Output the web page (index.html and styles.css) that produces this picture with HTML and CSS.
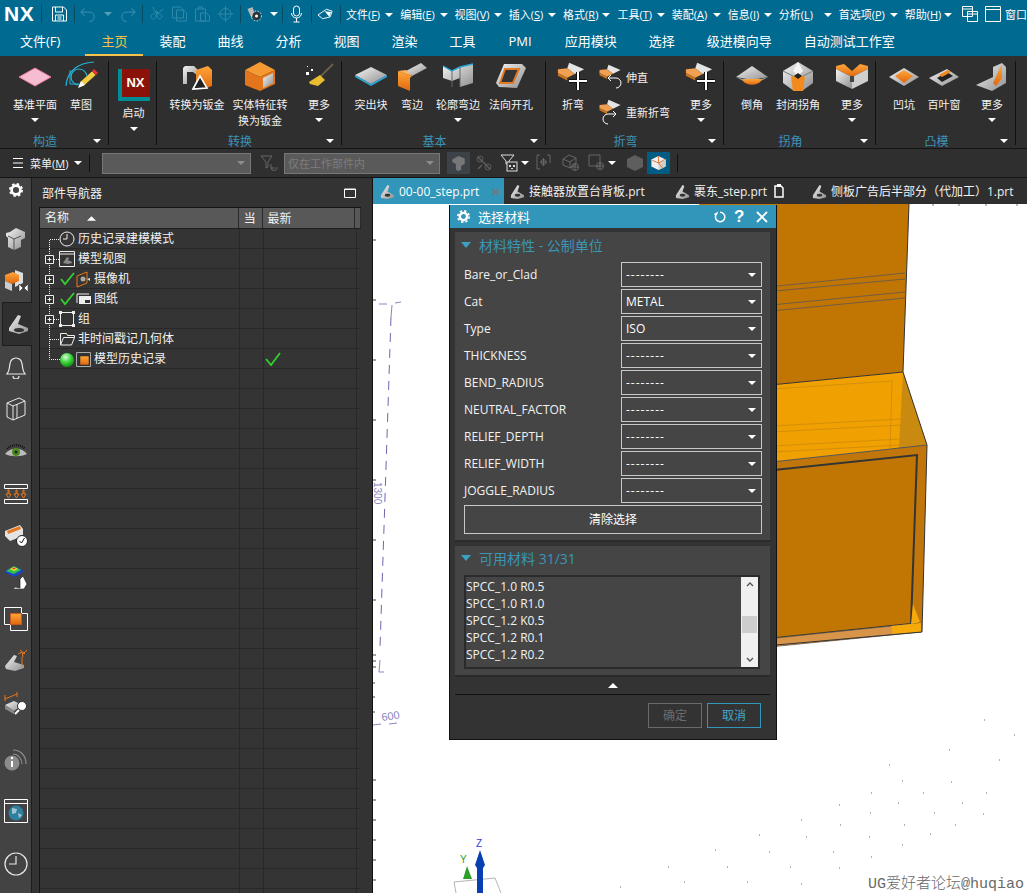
FILE: index.html
```html
<!DOCTYPE html>
<html lang="zh-CN">
<head>
  <meta charset="UTF-8" />
  <title>NX - 选择材料</title>
  <link rel="stylesheet" href="styles.css">
</head>
<body>
  <svg class="defs" width="0" height="0">
    <defs>
      <linearGradient id="o" x1="0" y1="0" x2="0" y2="1"><stop offset="0" stop-color="#ffa63a"/><stop offset="1" stop-color="#e0680f"/></linearGradient>
      <linearGradient id="g" x1="0" y1="0" x2="1" y2="1"><stop offset="0" stop-color="#f4f4f4"/><stop offset="1" stop-color="#8f8f8f"/></linearGradient>
      <radialGradient id="ball" cx=".4" cy=".3" r=".8"><stop offset="0" stop-color="#d8ffd8"/><stop offset=".5" stop-color="#35d235"/><stop offset="1" stop-color="#0b7d0b"/></radialGradient>
      <symbol id="plus" viewBox="0 0 20 20"><path d="M10 1v18M1 10h18" stroke="#111" stroke-width="4"/><path d="M10 1v18M1 10h18" stroke="#fff" stroke-width="2"/></symbol>
      <symbol id="bendico" viewBox="0 0 32 24"><path d="M14 1l16 7-10 5-8-6z" fill="#e4e4e4"/><path d="M2 8l10-1 8 6-8 4-10-5z" fill="#f0a050"/><path d="M2 12l10 5v3L2 15z" fill="#c9761f"/></symbol>
      <symbol id="tri" viewBox="0 0 8 4"><path d="M0 0h8L4 4z" fill="#fff"/></symbol>
    </defs>
  </svg>

  <header class="menubar">
    <span class="logo">NX</span>
    <i class="qsep"></i>
    <svg class="qa save" viewBox="0 0 16 16"><path d="M1 1h11l3 3v11H1z M4 1v5h7V1 M4 15V9h8v6 M6 11h4 M6 13h4" fill="none" stroke="#fff"/></svg>
    <i class="qsep"></i>
    <svg class="qa dim" viewBox="0 0 18 16"><path d="M5 2L1 6l4 4 M1 6h9a5 5 0 0 1 0 10" fill="none" stroke="#2f88a8" stroke-width="1.3"/></svg>
    <svg class="tri-s" viewBox="0 0 8 4"><use href="#tri" opacity=".35"/></svg>
    <svg class="qa dim" viewBox="0 0 18 16"><path d="M13 2l4 4-4 4 M17 6H8a5 5 0 0 0 0 10" fill="none" stroke="#2f88a8" stroke-width="1.3"/></svg>
    <i class="qsep"></i>
    <svg class="qa dim" viewBox="0 0 16 16"><path d="M4 1l5 8a2.500 2.500 0 1 0 2-1L7 5 M15 3l-8 6a2.500 2.500 0 1 1-2-1l4-3" fill="none" stroke="#2f88a8"/></svg>
    <svg class="qa dim" viewBox="0 0 16 16"><path d="M1 1h8l3 3v8H1z M5 4h7l3 3v8H5z" fill="none" stroke="#2f88a8"/></svg>
    <svg class="qa dim" viewBox="0 0 16 16"><path d="M1 3h10v12H1z M4 3V1h4v2 M6 7h6l3 3v5H6z" fill="none" stroke="#2f88a8"/></svg>
    <svg class="qa dim" viewBox="0 0 16 16"><circle cx="8" cy="8" r="5.500" fill="none" stroke="#2f88a8"/><path d="M8 0v16M0 8h16" stroke="#2f88a8"/></svg>
    <i class="qsep"></i>
    <svg class="qa" viewBox="0 0 16 16"><path d="M1 3l5-2 2 6-3 5z" fill="#b9b9b9"/><circle cx="10" cy="10" r="4" fill="#333"/><circle cx="10" cy="10" r="1.500" fill="#fff"/><circle cx="10" cy="10" r="5" fill="none" stroke="#ddd" stroke-dasharray="1.500 1.500"/></svg>
    <svg class="tri-s tight" viewBox="0 0 8 4"><use href="#tri"/></svg>
    <i class="qsep"></i>
    <svg class="qa mic" viewBox="0 0 12 18"><rect x="3" y="1" width="6" height="10" rx="3" fill="none" stroke="#fff"/><path d="M1 8a5 5 0 0 0 10 0 M6 13v4 M3 17h6" fill="none" stroke="#fff"/></svg>
    <i class="qsep"></i>
    <svg class="qa" viewBox="0 0 18 14"><path d="M1 8l9-6 6 2-2 6-8 2z" fill="none" stroke="#fff"/><path d="M8 4l5 6 2-5z" fill="#fff"/></svg>
    <i class="qsep last"></i>
    <nav class="menus">
      <span class="menu">文件(<u>F</u>)</span>
      <span class="menu">编辑(<u>E</u>)</span>
      <span class="menu">视图(<u>V</u>)</span>
      <span class="menu">插入(<u>S</u>)</span>
      <span class="menu">格式(<u>R</u>)</span>
      <span class="menu">工具(<u>T</u>)</span>
      <span class="menu">装配(<u>A</u>)</span>
      <span class="menu">信息(<u>I</u>)</span>
      <span class="menu">分析(<u>L</u>)</span>
      <span class="menu">首选项(<u>P</u>)</span>
      <span class="menu">帮助(<u>H</u>)</span>
    </nav>
    <svg class="winico" viewBox="0 0 16 16"><path d="M.5.5h10v10H.5z M.5 3h10 M5.500 5.500h10v10h-10z M5.500 8h10" fill="#006a91" stroke="#fff"/></svg>
    <svg class="winico" viewBox="0 0 16 16"><path d="M.5.5h15v15H.5z M.5 3.500h15" fill="none" stroke="#fff"/></svg>
    <span class="winlabel">窗口</span>
  </header>

  <nav class="tabs">
    <span class="tab file">文件(F)</span>
    <span class="tab active">主页</span>
    <span class="tab">装配</span>
    <span class="tab">曲线</span>
    <span class="tab">分析</span>
    <span class="tab">视图</span>
    <span class="tab">渲染</span>
    <span class="tab">工具</span>
    <span class="tab pmi">PMI</span>
    <span class="tab">应用模块</span>
    <span class="tab">选择</span>
    <span class="tab">级进模向导</span>
    <span class="tab">自动测试工作室</span>
  </nav>

  <section class="ribbon">
    <div class="group g-build">
      <div class="items">
        <div class="item w52"><svg class="ico" viewBox="0 0 34 32"><path d="M1 16L17 7l16 9-16 9z" fill="#f6bdd2" stroke="#e9799f"/></svg><span>基准平面</span><svg class="tri" viewBox="0 0 8 4"><use href="#tri"/></svg></div>
        <div class="item w40"><svg class="ico" viewBox="0 0 34 32"><path d="M2 25C3 10 14 2 30 1" fill="none" stroke="#23b4dc" stroke-width="1.200"/><path d="M6 9v14h14" fill="none" stroke="#23b4dc"/><circle cx="15" cy="16" r="8" fill="none" stroke="#23b4dc" stroke-width="1.200"/><path d="M14 27l3-7 11-10 4 4-11 10z" fill="#f3cb45" stroke="#222" stroke-width=".6"/><path d="M28 10l2-2 4 4-2 2z" fill="#e33"/><path d="M14 27l3-7 4 4z" fill="#fff"/></svg><span>草图</span></div>
      </div>
      <footer class="gfoot"><span>构造</span><svg class="tri" viewBox="0 0 8 4"><use href="#tri"/></svg></footer>
    </div>

    <div class="group g-start">
      <div class="items">
        <div class="item w49 tall"><div class="nxbadge"><b>NX</b></div><span>启动</span><svg class="tri" viewBox="0 0 8 4"><use href="#tri"/></svg></div>
      </div>
    </div>

    <div class="group g-conv">
      <div class="items">
        <div class="item w64"><svg class="ico" viewBox="0 0 34 32"><path d="M5 5h9l4 4v6l-5-4H7v12H3V7z" fill="url(#g)"/><path d="M16 9l12-4 4 4v16l-8 3-8-3z" fill="url(#o)"/><path d="M13 28l7-13 7 12z" fill="#222" stroke="#fff" stroke-width="1.600"/></svg><span>转换为钣金</span></div>
        <div class="item w62"><svg class="ico" viewBox="0 0 34 32"><path d="M17 1l15 8-15 7L2 9z" fill="#f59a32"/><path d="M2 9l15 7v14L2 24z" fill="#e5751a"/><path d="M17 16l15-7v14l-15 7z" fill="#e5751a"/><path d="M20 17l10-5v10l-10 5z" fill="url(#g)"/></svg><span>实体特征转<br>换为钣金</span></div>
        <div class="item w40 more"><svg class="ico" viewBox="0 0 34 32"><path d="M31 3L18 16" stroke="#6d5e48" stroke-width="1.800"/><path d="M18 14l5 5-7 6-8-2-1-2z" fill="#e8bd2f"/><rect x="4" y="11" width="3" height="3" fill="#fff"/><rect x="9" y="8" width="2" height="2" fill="#fff"/><rect x="5" y="5" width="1" height="1" fill="#fff"/></svg><span>更多</span><svg class="tri" viewBox="0 0 8 4"><use href="#tri"/></svg></div>
      </div>
      <footer class="gfoot"><span>转换</span><svg class="tri" viewBox="0 0 8 4"><use href="#tri"/></svg></footer>
    </div>

    <div class="group g-basic">
      <div class="items">
        <div class="item w44"><svg class="ico" viewBox="0 0 34 32"><path d="M1 14L17 6l16 8-16 9z" fill="url(#g)"/><path d="M1 14l16 9 16-9v2l-16 9L1 16z" fill="#2aa9d6"/></svg><span>突出块</span></div>
        <div class="item w38"><svg class="ico" viewBox="0 0 34 32"><path d="M11 10L26 2l6 5-15 8z" fill="url(#g)"/><path d="M3 10l14 5-2 2v13L3 25z" fill="url(#o)"/><path d="M3 10l8-1 6 6z" fill="#ffb35e"/></svg><span>弯边</span></div>
        <div class="item w54"><svg class="ico" viewBox="0 0 34 32"><path d="M2 5l9 5 8-4 13-3v19l-13 4v-9l-8 3-9-3z" fill="url(#g)"/><path d="M2 5l9 5 8-4 13-3" fill="none" stroke="#2aa9d6" stroke-width="1.400"/><path d="M11 10v16 M19 6v20" stroke="#666"/></svg><span>轮廓弯边</span><svg class="tri" viewBox="0 0 8 4"><use href="#tri"/></svg></div>
        <div class="item w52"><svg class="ico" viewBox="0 0 34 32"><path d="M10 3h18l4 4-9 20-18-1-3-4z" fill="url(#g)"/><path d="M11 8h14l-6 14H6z" fill="#333" stroke="#e07a26" stroke-width="2"/></svg><span>法向开孔</span></div>
      </div>
      <footer class="gfoot"><span>基本</span><svg class="tri" viewBox="0 0 8 4"><use href="#tri"/></svg></footer>
    </div>

    <div class="group g-fold">
      <div class="items">
        <div class="item w40"><svg class="ico" viewBox="0 0 34 32"><use href="#bendico" width="30" height="24"/><use href="#plus" x="12" y="10" width="20" height="20"/></svg><span>折弯</span></div>
        <div class="smallcol">
          <div class="smallitem"><svg class="sico" viewBox="0 0 24 26"><use href="#bendico" width="24" height="18"/><path d="M18 24a5 5 0 0 0 0-10H10l3-3m-3 3l3 3" fill="none" stroke="#fff"/></svg><span>伸直</span></div>
          <div class="smallitem"><svg class="sico" viewBox="0 0 24 26"><use href="#bendico" width="24" height="18"/><path d="M10 25a5 5 0 0 1 0-10h8l-3-3m3 3l-3 3" fill="none" stroke="#fff"/></svg><span>重新折弯</span></div>
        </div>
        <div class="item w40"><svg class="ico" viewBox="0 0 34 32"><use href="#bendico" width="30" height="24"/><use href="#plus" x="12" y="10" width="20" height="20"/></svg><span>更多</span><svg class="tri" viewBox="0 0 8 4"><use href="#tri"/></svg></div>
      </div>
      <footer class="gfoot"><span>折弯</span><svg class="tri" viewBox="0 0 8 4"><use href="#tri"/></svg></footer>
    </div>

    <div class="group g-corner">
      <div class="items">
        <div class="item w40"><svg class="ico" viewBox="0 0 34 32"><path d="M1 16L17 5l16 11-16 3z" fill="url(#g)"/><path d="M8 18h18v2c-4 5-14 5-18 0z" fill="url(#o)"/><path d="M1 16l7 2v2zM33 16l-7 2v2z" fill="#9a9a9a"/></svg><span>倒角</span></div>
        <div class="item w52"><svg class="ico" viewBox="0 0 34 32"><path d="M17 1l15 9v12l-11 8H13L2 22V10z" fill="url(#g)"/><path d="M17 1l5 9-5 5-5-5z" fill="#f4f4f4"/><path d="M10 16l7-3 7 3-2 14h-10z" fill="#f28a1e"/><path d="M13 15l4-3 4 3-4 3z" fill="#222"/><path d="M2 10l10 5M32 10l-10 5" stroke="#777"/></svg><span>封闭拐角</span></div>
        <div class="item w40 more"><svg class="ico" viewBox="0 0 34 32"><path d="M1 5l8-2 8 7 8-7 8 2v3l-16 8L1 8z" fill="url(#o)"/><path d="M1 8l16 8v12L1 20z" fill="url(#g)"/><path d="M33 8L17 16v12l16-8z" fill="#cfcfcf"/><rect x="15" y="15" width="4" height="6" fill="#444"/></svg><span>更多</span><svg class="tri" viewBox="0 0 8 4"><use href="#tri"/></svg></div>
      </div>
      <footer class="gfoot"><span>拐角</span><svg class="tri" viewBox="0 0 8 4"><use href="#tri"/></svg></footer>
    </div>

    <div class="group g-punch">
      <div class="items">
        <div class="item w40"><svg class="ico" viewBox="0 0 34 32"><path d="M2 16L17 7l15 9-15 9z" fill="url(#g)"/><path d="M8 15l9-6 9 6-9 7z" fill="url(#o)"/></svg><span>凹坑</span></div>
        <div class="item w40"><svg class="ico" viewBox="0 0 34 32"><path d="M2 17L20 8l12 8-17 9z" fill="url(#g)"/><path d="M10 17l10-6 6 4-11 6z" fill="#222"/><path d="M12 14l9-5 3 2-9 5z" fill="#f08a1e"/></svg><span>百叶窗</span></div>
        <div class="item w40 more"><svg class="ico" viewBox="0 0 34 32"><path d="M1 24L18 16V6l9-4 4 4v16l-14 8z" fill="url(#g)"/><path d="M18 22L27 3v14l-6 8z" fill="url(#o)"/></svg><span>更多</span><svg class="tri" viewBox="0 0 8 4"><use href="#tri"/></svg></div>
      </div>
      <footer class="gfoot"><span>凸模</span><svg class="tri" viewBox="0 0 8 4"><use href="#tri"/></svg></footer>
    </div>
  </section>

  <section class="toolbar">
    <svg class="burger" viewBox="0 0 10 10"><path d="M0 .5h10M0 5h10M0 9.500h10" stroke="#fff"/></svg>
    <span class="tb-menu">菜单(<u>M</u>)</span>
    <svg class="tri-s" viewBox="0 0 8 4"><use href="#tri"/></svg>
    <i class="tsep"></i>
    <div class="combo c1"><svg class="tri-s" viewBox="0 0 8 4"><use href="#tri" opacity=".3"/></svg></div>
    <svg class="tb t0" viewBox="0 0 18 18"><path d="M1 2h11L8 8v5l-2 1V8z" fill="none" stroke="#666"/><path d="M17 13a3 3 0 1 1-6 1m0-4v4h4" fill="none" stroke="#666"/></svg>
    <div class="combo c2"><span>仅在工作部件内</span><svg class="tri-s" viewBox="0 0 8 4"><use href="#tri" opacity=".3"/></svg></div>
    <div class="tb-box dimbox"><svg viewBox="0 0 16 18"><path d="M1 5l7-4 7 3v6l-4 2v5l-4 1-2-2V10L1 8z" fill="#777"/></svg></div>
    <svg class="tb" viewBox="0 0 18 18"><path d="M3 3l6 6 6 6M3 15l4-4" stroke="#5c5c5c" stroke-width="1.500" fill="none"/><circle cx="5" cy="5" r="3" fill="none" stroke="#5c5c5c"/><circle cx="13" cy="13" r="3" fill="none" stroke="#5c5c5c"/></svg>
    <svg class="tb lit" viewBox="0 0 18 18"><path d="M1 1h13L9 7v3H6V7z" fill="none" stroke="#ddd"/><rect x="7" y="8" width="10" height="9" fill="#333" stroke="#ddd"/><path d="M9 11h2v2H9zM13 11h2v2h-2zM11 14h2v1h-2z" fill="#ddd"/></svg>
    <svg class="tri-s" viewBox="0 0 8 4"><use href="#tri"/></svg>
    <svg class="tb t1" viewBox="0 0 18 18"><path d="M4 1H1v14h3M11 1h3v8" fill="none" stroke="#666"/><circle cx="7.500" cy="8" r="2.500" fill="none" stroke="#666"/><path d="M7.500 4v8M4 8h7" stroke="#666"/></svg>
    <svg class="tb" viewBox="0 0 18 18"><path d="M1 5l6-4 7 3v6l-6 4-7-3z M1 5l7 3 6-4 M8 8v6" fill="none" stroke="#666"/><circle cx="13" cy="13" r="3.500" fill="none" stroke="#666"/><path d="M13 9v8M9 13h8" stroke="#666"/></svg>
    <svg class="tb t3" viewBox="0 0 18 18"><path d="M1 1h11v11H1z" fill="none" stroke="#666"/><circle cx="12" cy="12" r="3.500" fill="none" stroke="#666"/><path d="M12 8v8M8 12h8" stroke="#666"/></svg>
    <svg class="tri-s" viewBox="0 0 8 4"><use href="#tri"/></svg>
    <svg class="tb t2" viewBox="0 0 18 18"><path d="M9 1l8 4v8l-8 4-8-4V5z" fill="#5e5e5e"/></svg>
    <div class="tb-box activebox"><svg viewBox="0 0 18 18"><path d="M9 1l8 4v8l-8 4-8-4V5z" fill="#eee"/><path d="M9 9l8-4v8l-8 4z" fill="#cfcfcf"/><path d="M9 1v8l5 6M2 6l7 3 7-4" fill="none" stroke="#e0702a"/></svg></div>
    <i class="tsep"></i>
  </section>

  <main class="work">
    <aside class="rail">
      <div class="ri first"><svg class="rico gear" viewBox="0 0 16 16"><circle cx="8" cy="8" r="5" fill="none" stroke="#fff" stroke-width="3"/><circle cx="8" cy="8" r="7" fill="none" stroke="#fff" stroke-width="2" stroke-dasharray="2.800 2.700"/></svg></div>
      <div class="ri second"><svg class="rico" viewBox="0 0 24 24"><path d="M12 1l9 4v6l-4 2v7l-7 3-6-3v-9l-2-2V6l4-1z" fill="url(#g)"/><path d="M4 9l6 3 7-3M10 12v11" stroke="#555" fill="none"/></svg></div>
      <div class="ri"><svg class="rico" viewBox="0 0 24 24"><path d="M11 1l8 3v10l-8 4z" fill="#ddd"/><path d="M1 6l8-3 6 3v6l-7 3-7-3z" fill="url(#o)"/><path d="M1 12l7 3v7l-7-3z" fill="#ccc"/><path d="M15 15l4 4-4 4zM24 15l-4 4 4 4z" fill="#fff" stroke="#111" stroke-width=".5"/></svg></div>
      <div class="ri on"><svg class="rico" viewBox="0 0 24 24"><path d="M3 16L12 3l3 1-3 8 10 4v3l-9 3-10-3z" fill="url(#g)"/><ellipse cx="13" cy="18" rx="5" ry="2" fill="#333"/></svg></div>
      <div class="ri"><svg class="rico" viewBox="0 0 24 24"><path d="M3 19c3-3 2-7 3-10a6 6 0 0 1 12 0c1 3 0 7 3 10z M9 21a3 3 0 0 0 6 0" fill="none" stroke="#e8e8e8" stroke-width="1.200"/></svg></div>
      <div class="ri"><svg class="rico" viewBox="0 0 24 24"><path d="M3 6l12-5 6 3v14l-12 5-6-3z M3 6l6 3v14 M9 9l12-5 M13 7v14" fill="none" stroke="#e8e8e8"/></svg></div>
      <div class="ri"><svg class="rico" viewBox="0 0 24 24"><path d="M1 15C6 8 18 8 23 15c-6 3-16 3-22 0z" fill="#bbb"/><circle cx="12" cy="13" r="4" fill="#4d8a1e"/><circle cx="12" cy="13" r="1.500" fill="#222"/><path d="M3 10C7 5 17 5 21 10" stroke="#111" stroke-width="2" fill="none" stroke-dasharray="1 1"/></svg></div>
      <div class="ri"><svg class="rico" viewBox="0 0 24 24"><path d="M.5 3.500h23v4H.5zM.5 18.500h23v4H.5z" fill="none" stroke="#fff"/><path d="M4 9v4H2l2.500 4L7 13H5V9zM12 9v4h-2l2.500 4 2.500-4h-2V9zM19 9v4h-2l2.500 4 2.500-4h-2V9z" fill="none" stroke="#e9781a"/></svg></div>
      <div class="ri"><svg class="rico" viewBox="0 0 24 24"><path d="M1 8l15-6 3 4v7L6 18 1 13z" fill="#e4e4e4"/><path d="M3 8l13-5 1 3-13 5z" fill="#e9781a"/><circle cx="18" cy="18" r="5.500" fill="#fff" stroke="#222"/><path d="M15.500 18l2 2 3-5" stroke="#111" fill="none"/></svg></div>
      <div class="ri"><svg class="rico" viewBox="0 0 24 24"><path d="M0 7L10 1l10 5-9 6z" fill="#1d43c8"/><path d="M2 6L10 1l7 4-7 4z" fill="#2fc24a"/><path d="M6 4l4-2 4 2-4 2z" fill="#f0e030"/><path d="M8 3.500l2-1 2 1-2 1z" fill="#e33"/><path d="M9 24l2-2 5 1v-9l3-3 4 8-3 5z" fill="#fff" stroke="#111" stroke-width=".6"/></svg></div>
      <div class="ri"><svg class="rico" viewBox="0 0 24 24"><path d="M.5.500h17v17H.5z" fill="none" stroke="#fff"/><path d="M6.500 6.500h17v17h-17z" fill="none" stroke="#fff"/><rect x="6.500" y="6.500" width="11" height="11" fill="url(#o)" stroke="#c9591a"/></svg></div>
      <div class="ri"><svg class="rico" viewBox="0 0 24 24"><path d="M1 17L10 6l3 1-3 6 10 3v3l-9 3-9-2z" fill="url(#g)"/><path d="M16 1l5 4M23 1l-4 4M14 5l4-2 1 5M18 8v10" stroke="#e9781a" fill="none"/></svg></div>
      <div class="ri"><svg class="rico" viewBox="0 0 24 24"><path d="M1 14l9-4 8 4-8 6z" fill="url(#g)"/><path d="M1 14l9 6v3l-9-5z" fill="#888"/><circle cx="18" cy="15" r="4.500" fill="#fff" stroke="#333"/><path d="M15 19l-4 4" stroke="#fff" stroke-width="2"/><path d="M1 8l12-5M1 4v6M13 1v5" stroke="#e9781a" fill="none"/></svg></div>
      <div class="ri gap14"><svg class="rico" viewBox="0 0 24 24"><circle cx="8" cy="16" r="7.500" fill="#8b8b8b"/><path d="M8 14v6" stroke="#fff" stroke-width="2"/><circle cx="8" cy="11" r="1.200" fill="#fff"/><path d="M9 3c8 0 13 6 13 14M9 7c5 0 9 5 9 10" fill="none" stroke="#8a8a8a" stroke-width="1.200"/></svg></div>
      <div class="ri gap10"><svg class="rico" viewBox="0 0 24 24"><path d="M.5.500h23v23H.5z M.5 4.500h23" fill="none" stroke="#fff"/><circle cx="12" cy="14" r="7.500" fill="#2e7e9f"/><path d="M8 9l5 1-1 4-4 1zM14 14l4 2-3 3z" fill="#9fc6d4"/></svg></div>
      <div class="ri gap11"><svg class="rico" viewBox="0 0 24 24"><circle cx="12" cy="12" r="11" fill="none" stroke="#e8e8e8" stroke-width="1.200"/><path d="M12 4v8H5" fill="none" stroke="#e8e8e8" stroke-width="1.200"/></svg></div>
    </aside>

    <section class="navigator">
      <div class="nav-title">
        <span>部件导航器</span>
        <svg class="maxbtn" viewBox="0 0 12 10"><path d="M.5 1h11v8.500H.5z M.5 1.500h11" fill="none" stroke="#fff"/></svg>
      </div>
      <div class="table">
        <div class="thead">
          <span class="col-name">名称<svg class="sort" viewBox="0 0 8 4"><path d="M0 4h8L4 0z" fill="#fff"/></svg></span>
          <span class="col-cur">当</span>
          <span class="col-new">最新</span>
          <span class="col-end"></span>
        </div>
        <div class="tbody">
          <div class="row">
            <svg class="twig" viewBox="0 0 36 20"><path d="M9.500 20v-9.500H20" stroke="#eee" stroke-dasharray="1 1" fill="none"/><circle cx="27" cy="10" r="7" fill="none" stroke="#eee"/><path d="M27 5v5h-4" fill="none" stroke="#eee"/></svg>
            <span>历史记录建模模式</span>
          </div>
          <div class="row">
            <svg class="twig" viewBox="0 0 36 20"><path d="M9.500 0v20M14 10.500h6" stroke="#eee" stroke-dasharray="1 1" fill="none"/><path d="M5.500 6.500h8v8h-8z" fill="#2f2f2f" stroke="#eee"/><path d="M7.500 10.500h4M9.500 8.500v4" stroke="#eee"/><path d="M19.500 2.500h15v15h-15z M19.500 5h15" fill="none" stroke="#eee"/><path d="M23 14l4-6 2 1-1 2 4 2v1l-4 1z" fill="#888"/></svg>
            <span>模型视图</span>
          </div>
          <div class="row">
            <svg class="twig long" viewBox="0 0 52 20"><path d="M9.500 0v20" stroke="#eee" stroke-dasharray="1 1"/><path d="M5.500 6.500h8v8h-8z" fill="#2f2f2f" stroke="#eee"/><path d="M7.500 10.500h4M9.500 8.500v4" stroke="#eee"/><path d="M21 10l4 5 9-11" fill="none" stroke="#2fd22f" stroke-width="1.800"/><path d="M37 7l10-4v11l-10 4z" fill="none" stroke="#e9781a"/><circle cx="43" cy="10" r="2.500" fill="#aaa"/><path d="M47 10l3-1v3z" fill="#ddd"/></svg>
            <span>摄像机</span>
          </div>
          <div class="row">
            <svg class="twig long" viewBox="0 0 52 20"><path d="M9.500 0v20" stroke="#eee" stroke-dasharray="1 1"/><path d="M5.500 6.500h8v8h-8z" fill="#2f2f2f" stroke="#eee"/><path d="M7.500 10.500h4M9.500 8.500v4" stroke="#eee"/><path d="M21 10l4 5 9-11" fill="none" stroke="#2fd22f" stroke-width="1.800"/><path d="M37 14V5h12" fill="none" stroke="#eee"/><rect x="39" y="7" width="12" height="8" fill="#eee"/><rect x="45" y="11" width="5" height="3" fill="#333"/></svg>
            <span>图纸</span>
          </div>
          <div class="row">
            <svg class="twig" viewBox="0 0 36 20"><path d="M9.500 0v20M14 10.500h6" stroke="#eee" stroke-dasharray="1 1" fill="none"/><path d="M5.500 6.500h8v8h-8z" fill="#2f2f2f" stroke="#eee"/><path d="M7.500 10.500h4M9.500 8.500v4" stroke="#eee"/><path d="M20.500 3.500h13v13h-13z" fill="none" stroke="#eee"/><path d="M19 2h3v3h-3zM32 2h3v3h-3zM19 15h3v3h-3zM32 15h3v3h-3z" fill="#eee"/></svg>
            <span>组</span>
          </div>
          <div class="row">
            <svg class="twig" viewBox="0 0 36 20"><path d="M9.500 0v20M10 10.500h10" stroke="#eee" stroke-dasharray="1 1" fill="none"/><path d="M20.500 16V4.500h6l1 2h7v2 M20.500 16l3-7.500h11l-3 7.500z" fill="none" stroke="#eee"/></svg>
            <span>非时间戳记几何体</span>
          </div>
          <div class="row">
            <svg class="twig long" viewBox="0 0 52 20"><path d="M9.500 0v10.500H20" stroke="#eee" stroke-dasharray="1 1" fill="none"/><circle cx="27" cy="11" r="7" fill="url(#ball)"/><path d="M36.500 3.500h14v14h-14z" fill="none" stroke="#aaa"/><rect x="40" y="7" width="9" height="9" fill="url(#o)" stroke="#222" stroke-width=".5"/></svg>
            <span>模型历史记录</span>
            <svg class="okmark" viewBox="0 0 16 14"><path d="M1 7l5 6 9-12" fill="none" stroke="#2fd22f" stroke-width="1.800"/></svg>
          </div>
        </div>
      </div>
    </section>

    <section class="viewer">
      <div class="filetabs">
        <span class="ftab on"><svg class="fico" viewBox="0 0 16 16"><path d="M1 12L8 1l2 1-2 6 7 4v2l-7 2-7-1z" fill="url(#g)"/><ellipse cx="8" cy="12" rx="3" ry="1.500" fill="#333"/></svg>00-00_step.prt<b class="fclose">✕</b></span>
        <span class="ftab t2"><svg class="fico" viewBox="0 0 16 16"><path d="M1 12L8 1l2 1-2 6 7 4v2l-7 2-7-1z" fill="url(#g)"/><ellipse cx="8" cy="12" rx="3" ry="1.500" fill="#333"/></svg>接触器放置台背板.prt</span>
        <span class="ftab t3"><svg class="fico" viewBox="0 0 16 16"><path d="M1 12L8 1l2 1-2 6 7 4v2l-7 2-7-1z" fill="url(#g)"/><ellipse cx="8" cy="12" rx="3" ry="1.500" fill="#333"/></svg>裹东_step.prt<svg class="fdoc" viewBox="0 0 10 14"><path d="M1 2h6l2 2v9H1z" fill="none" stroke="#fff" stroke-width="1.500"/><path d="M3 0h4v3H3z" fill="#fff"/></svg></span>
        <span class="ftab t4"><svg class="fico" viewBox="0 0 16 16"><path d="M1 12L8 1l2 1-2 6 7 4v2l-7 2-7-1z" fill="url(#g)"/><ellipse cx="8" cy="12" rx="3" ry="1.500" fill="#333"/></svg>侧板广告后半部分（代加工）1.prt</span>
      </div>
      <div class="canvas">
        <svg class="scene" viewBox="374 204 653 689">
          <!-- orange sheet-metal part behind the dialog -->
          <path d="M700 204H910L904 372 700 392z" fill="#c17603"/>
          <path d="M700 392L904 372 928 445 700 470z" fill="#f0a000"/>
          <path d="M904 372l-4 77 28-4z" fill="#c98a10"/>
          <path d="M700 470L928 445 923 632 700 654z" fill="#c0760a"/>
          <path d="M700 478L918 455 912 624 700 646z" fill="#c17603" stroke="#343434" stroke-width="2"/>
          <path d="M700 646L912 624 922 623 922 632 700 654z" fill="#d8954a" stroke="#555" stroke-width=".6"/>
          <path d="M892 626l30-3v9l-28 2z" fill="#f5a90a"/>
          <path d="M912 624l2-20 7 18z" fill="#f5a90a"/>
          <path d="M910 204L904 372M904 372L928 445 923 632 777 645" fill="none" stroke="#333" stroke-width="1"/>
          <path d="M700 392L904 372" stroke="#333" stroke-width="1"/>
          <path d="M700 470L928 445" stroke="#555" stroke-width="1"/>
          <path d="M700 294L906 273M700 298L906 279M700 312L906 292M700 318L906 298" stroke="#6a5a4a" stroke-width=".9"/>
          <path d="M700 394L893 381 891 449M700 430L902 419M700 436L902 425M700 450L902 439M700 456L902 445" fill="none" stroke="#d08c0a" stroke-width=".9"/>
          <!-- dimensions -->
          <path d="M392 317L381 648" stroke="#6f69b2" stroke-dasharray="9 7" fill="none"/>
          <path d="M380 304l8 0M396 303l6-1M393 305l-1 12M374 725l8-1M390 724l8-1M381 660l-1 12 5 0" fill="none" stroke="#8a85bf"/>
          <text class="dim-text" transform="translate(375 482) rotate(90)">1300</text>
          <text class="dim-long" transform="translate(383 721) rotate(-8)">600</text>
          <path d="M374 655h3M374 661h3M374 667h3M374 683h2M374 697h2M374 712h2M374 240h3M374 300h3M374 360h3M374 420h3M374 480h3M374 540h3M374 600h3M374 780h3M374 800h3M374 820h3M374 840h3M374 860h3M374 880h3" stroke="#444"/>
          <path d="M804 204v2M842 204v2M875 204v2M934 204v2M960 204v2M987 204v2M1018 204v2" stroke="#777"/>
          <!-- background points -->
          <path class="dots" d="M903 781h1M952 782h1M872 793h1M924 793h1M987 793h1M840 805h1M899 803h1M963 803h1M871 813h1M935 813h1M984 814h1M802 820h1M841 825h1M905 825h1M956 825h1M760 835h1M807 837h1M870 837h1M931 834h1M716 850h1M770 852h1M834 852h1M903 845h1M872 857h1M669 867h1M728 867h1M791 867h1M840 868h1M621 887h1M685 882h1M748 882h1M802 884h1M950 750h1M1000 760h1M890 765h1M985 720h1M1015 735h1"/>
          <!-- axes -->
          <path d="M455 882l41-4 6 15M455 882l2 11" fill="none" stroke="#b5b5b5"/>
          <path d="M468 866l5 13h-9z" fill="#2aa02a"/>
          <path d="M481 850l5 15-2 3v25h-6v-25l-2-3z" fill="#0a3fb4"/>
          <text class="axis-y" x="461" y="863">Y</text>
          <text class="axis-z" x="477" y="847">Z</text>
        </svg>

        <div class="watermark">UG爱好者论坛@huqiao</div>

        <div class="dialog">
          <div class="dlg-title">
            <svg class="dlg-gear" viewBox="0 0 16 16"><circle cx="8" cy="8" r="4.500" fill="none" stroke="#fff" stroke-width="3"/><circle cx="8" cy="8" r="7" fill="none" stroke="#fff" stroke-width="2" stroke-dasharray="2.800 2.700"/></svg>
            <span class="dlg-name">选择材料</span>
            <svg class="dlg-act" viewBox="0 0 14 14"><path d="M7 1.500a5.500 5.500 0 1 1-5 3.500" fill="none" stroke="#fff" stroke-width="1.800"/><path d="M4 0v5H0z" fill="#fff" transform="rotate(20 3 3)"/></svg>
            <span class="dlg-help">?</span>
            <svg class="dlg-act close" viewBox="0 0 12 12"><path d="M1 1l10 10M11 1L1 11" stroke="#fff" stroke-width="1.800"/></svg>
          </div>

          <div class="panel props">
            <div class="sec-head"><svg class="sec-tri" viewBox="0 0 10 6"><path d="M0 0h10L5 6z" fill="#3aa0c4"/></svg>材料特性 - 公制单位</div>
            <div class="prop"><label>Bare_or_Clad</label><div class="sel"><span class="dash">--------</span><svg class="tri-s" viewBox="0 0 8 4"><use href="#tri"/></svg></div></div>
            <div class="prop"><label>Cat</label><div class="sel">METAL<svg class="tri-s" viewBox="0 0 8 4"><use href="#tri"/></svg></div></div>
            <div class="prop"><label>Type</label><div class="sel">ISO<svg class="tri-s" viewBox="0 0 8 4"><use href="#tri"/></svg></div></div>
            <div class="prop"><label>THICKNESS</label><div class="sel"><span class="dash">--------</span><svg class="tri-s" viewBox="0 0 8 4"><use href="#tri"/></svg></div></div>
            <div class="prop"><label>BEND_RADIUS</label><div class="sel"><span class="dash">--------</span><svg class="tri-s" viewBox="0 0 8 4"><use href="#tri"/></svg></div></div>
            <div class="prop"><label>NEUTRAL_FACTOR</label><div class="sel"><span class="dash">--------</span><svg class="tri-s" viewBox="0 0 8 4"><use href="#tri"/></svg></div></div>
            <div class="prop"><label>RELIEF_DEPTH</label><div class="sel"><span class="dash">--------</span><svg class="tri-s" viewBox="0 0 8 4"><use href="#tri"/></svg></div></div>
            <div class="prop"><label>RELIEF_WIDTH</label><div class="sel"><span class="dash">--------</span><svg class="tri-s" viewBox="0 0 8 4"><use href="#tri"/></svg></div></div>
            <div class="prop"><label>JOGGLE_RADIUS</label><div class="sel"><span class="dash">--------</span><svg class="tri-s" viewBox="0 0 8 4"><use href="#tri"/></svg></div></div>
            <div class="clear-btn">清除选择</div>
          </div>

          <div class="panel mats">
            <div class="sec-head"><svg class="sec-tri" viewBox="0 0 10 6"><path d="M0 0h10L5 6z" fill="#3aa0c4"/></svg>可用材料 31/31</div>
            <div class="listbox">
              <ul>
                <li>SPCC_1.0 R0.5</li>
                <li>SPCC_1.0 R1.0</li>
                <li>SPCC_1.2 K0.5</li>
                <li>SPCC_1.2 R0.1</li>
                <li>SPCC_1.2 R0.2</li>
              </ul>
              <div class="sbar">
                <svg class="sarrow" viewBox="0 0 8 5"><path d="M1 4l3-3 3 3" fill="none" stroke="#555" stroke-width="1.400"/></svg>
                <div class="sthumb"></div>
                <svg class="sarrow" viewBox="0 0 8 5"><path d="M1 1l3 3 3-3" fill="none" stroke="#555" stroke-width="1.400"/></svg>
              </div>
            </div>
          </div>

          <div class="collapse"><svg class="tri-up" viewBox="0 0 10 5"><path d="M0 5h10L5 0z" fill="#fff"/></svg></div>
          <div class="dlg-btns">
            <span class="btn off">确定</span>
            <span class="btn cancel">取消</span>
          </div>
        </div>
      </div>
    </section>
  </main>
</body>
</html>
```
FILE: styles.css
```css
* {
  box-sizing: border-box;
}
html, body {
  margin: 0;
  height: 893px;
  overflow: hidden;
}
body {
  width: 1027px;
  font-family: "Open Sans", "Noto Sans CJK SC", sans-serif;
  font-size: 12px;
  color: #f2f2f2;
  background: #2f2f2f;
  display: flex;
  flex-direction: column;
}
svg {
  display: block;
  flex: none;
}
i {
  display: block;
  flex: none;
}
.defs {
  width: 0;
  height: 0;
}
.tri-s {
  width: 8px;
  height: 4px;
}

/* top menu bar */
.menubar {
  height: 28px;
  flex: none;
  background: #006a91;
  display: flex;
  align-items: center;
  padding-left: 4px;
  color: #fff;
  overflow: hidden;
}
.logo {
  width: 34px;
  font-family: "Liberation Sans", sans-serif;
  font-size: 21px;
  font-weight: bold;
  letter-spacing: 0.5px;
}
.qsep {
  width: 1px;
  height: 18px;
  background: #0b4a63;
  margin: 0 2px 0 3px;
}
.qsep.last {
  margin-right: 5px;
}
.qa {
  width: 17px;
  height: 16px;
  margin: 0 3px;
}
.qa.save {
  margin-left: 7px;
}
.qa.mic {
  margin: 0 5px;
  width: 13px;
  height: 18px;
}
.menubar .tri-s {
  margin: 0 4px;
}
.menubar .tri-s.tight {
  margin-right: 1px;
}
.menus {
  display: flex;
  font-size: 11px;
}
.menu {
  width: 54.3px;
  position: relative;
  white-space: nowrap;
}
.menu::after {
  content: "";
  position: absolute;
  right: 7px;
  top: 7px;
  border: 4px solid transparent;
  border-top-color: #fff;
  border-bottom: 0;
}
.menu:nth-child(7) { width: 56px; }
.menu:nth-child(8) { width: 51px; }
.menu:nth-child(9) { width: 60px; }
.menu:nth-child(10) { width: 66px; }
.winico {
  width: 16px;
  height: 16px;
  margin: 0 7px 0 0;
}
.winico + .winico {
  margin-right: 4px;
}
.menus + .winico {
  margin-left: 3px;
}
.winlabel {
  font-size: 11px;
  white-space: nowrap;
}

/* ribbon tabs */
.tabs {
  height: 28px;
  flex: none;
  background: #006a91;
  display: flex;
  color: #fff;
  font-size: 13px;
  line-height: 26px;
}
.tab {
  padding: 0 16px;
  white-space: nowrap;
}
.tab.file {
  margin: 0 9px 0 4px;
}
.tab.pmi {
  padding: 0 17px;
}
.tab.active {
  color: #f5c14b;
  border-bottom: 2px solid #f5c14b;
}

/* ribbon */
.ribbon {
  height: 93px;
  flex: none;
  background: #2f2f2f;
  display: flex;
  padding-top: 5px;
  border-bottom: 1px solid #151515;
}
.group {
  height: 84px;
  flex: none;
  display: flex;
  flex-direction: column;
  border-right: 1px solid #111;
}
.g-build { width: 109px; }
.g-start { width: 48px; }
.g-conv { width: 185px; }
.g-basic { width: 204px; }
.g-fold { width: 178px; }
.g-corner { width: 152px; }
.g-punch { width: 140px; }
.items {
  display: flex;
  height: 69px;
}
.g-build .items { padding-left: 9px; }
.g-conv .items { padding-left: 8px; }
.g-basic .items { padding-left: 7px; }
.g-fold .items { padding-left: 7px; }
.g-corner .items { padding-left: 8px; }
.g-punch .items { padding-left: 8px; }
.item {
  flex: none;
  display: flex;
  flex-direction: column;
  align-items: center;
  font-size: 11px;
  line-height: 16px;
  text-align: center;
  white-space: nowrap;
}
.w38 { width: 38px; }
.w40 { width: 40px; }
.w44 { width: 44px; }
.w49 { width: 49px; }
.w52 { width: 52px; }
.w54 { width: 54px; }
.w62 { width: 62px; }
.w64 { width: 64px; }
.more { margin-left: 8px; }
.ico {
  width: 34px;
  height: 32px;
  margin-bottom: 4px;
}
.item .tri {
  margin-top: 5px;
}
.tri {
  width: 8px;
  height: 4px;
}
.item.tall {
  padding-top: 8px;
}
.nxbadge {
  width: 32px;
  height: 32px;
  background: #008e96;
  padding: 0 0 4px 4px;
  margin-bottom: 4px;
}
.nxbadge b {
  display: block;
  height: 28px;
  background: #8b1209;
  font-family: "Liberation Sans", sans-serif;
  font-size: 13px;
  line-height: 28px;
  text-align: center;
  color: #fff;
}
.g-start .item .tri {
  margin-top: 6px;
}
.gfoot {
  margin-top: auto;
  margin-bottom: -3px;
  height: 15px;
  display: flex;
  align-items: center;
  color: #3c93b8;
  font-size: 12px;
}
.gfoot span {
  flex: 1;
  text-align: center;
}
.gfoot .tri {
  margin: 0 7px 0 3px;
}
.smallcol {
  width: 88px;
  flex: none;
  font-size: 11px;
}
.smallitem {
  height: 30px;
  display: flex;
  align-items: center;
  gap: 4px;
  margin-top: 1px;
  margin-bottom: 5px;
}
.sico {
  width: 24px;
  height: 26px;
  margin-left: 5px;
}

/* second toolbar */
.toolbar {
  height: 29px;
  flex: none;
  background: #2f2f2f;
  display: flex;
  align-items: center;
  padding-left: 13px;
  border-bottom: 1px solid #151515;
}
.burger {
  width: 10px;
  height: 10px;
  margin-right: 7px;
}
.tb-menu {
  font-size: 11px;
  margin-right: 3px;
  width: 41px;
  white-space: nowrap;
}
.tsep {
  width: 1px;
  height: 18px;
  background: #111;
  margin: 0 12px 0 7px;
}
.combo {
  height: 21px;
  border: 1px solid #777;
  background: #5a5a5a;
  display: flex;
  align-items: center;
  justify-content: space-between;
  padding: 0 5px 0 3px;
  font-size: 11px;
  color: #7d7d7d;
}
.combo.c1 {
  width: 149px;
  justify-content: flex-end;
}
.combo.c2 {
  width: 156px;
}
.tb {
  width: 18px;
  height: 18px;
  margin: 0 4px;
}
.tb.t0 {
  margin: 0 6px 0 9px;
}
.tb-box {
  width: 23px;
  height: 22px;
  padding: 3px;
}
.tb-box svg {
  width: 17px;
  height: 16px;
}
.dimbox {
  background: #3c4248;
  margin: 0 1px 0 7px;
}
.activebox {
  background: #005c82;
}
.tb.lit {
  margin: 0 3px 0 3px;
}
.tb.t1 {
  margin-left: 7px;
}
.tb.t3 {
  margin-right: 2px;
}
.tb.t2 {
  margin: 0 3px 0 10px;
}

/* work area */
.work {
  flex: 1;
  min-height: 0;
  display: flex;
}
.rail {
  width: 32px;
  flex: none;
  background: #434343;
  border-right: 1px solid #1d1d1d;
}
.ri {
  height: 42px;
  display: flex;
  align-items: center;
  justify-content: center;
}
.ri.first {
  height: 24px;
}
.ri.second {
  margin-top: 16px;
}
.ri.on {
  background: #2f2f2f;
  margin: 0 -1px 0 2px;
  height: 44px;
  border: 1px solid #1d1d1d;
  border-right: 0;
}
.ri.gap14 { margin-top: 14px; }
.ri.gap10 { margin-top: 10px; }
.ri.gap11 { margin-top: 11px; }
.rico {
  width: 24px;
  height: 24px;
}
.rico.gear {
  width: 14px;
  height: 14px;
}
.navigator {
  width: 341px;
  flex: none;
  background: #333;
  padding-left: 7px;
  border-right: 1px solid #111;
  display: flex;
  flex-direction: column;
}
.nav-title {
  height: 29px;
  flex: none;
  display: flex;
  align-items: center;
  justify-content: space-between;
  padding: 0 16px 0 3px;
}
.maxbtn {
  width: 12px;
  height: 10px;
}
.table {
  width: 322px;
  flex: 1;
  display: flex;
  flex-direction: column;
  border-left: 1px solid #141414;
  border-top: 1px solid #141414;
}
.thead {
  height: 21px;
  flex: none;
  display: flex;
  background: #585858;
  border-bottom: 1px solid #1f1f1f;
  line-height: 22px;
}
.thead span {
  padding-left: 5px;
  border-right: 1px solid #2a2a2a;
}
.col-name {
  width: 200px;
  display: flex;
  align-items: center;
  gap: 18px;
}
.sort {
  width: 9px;
  height: 5px;
}
.col-cur {
  width: 24px;
}
.col-new {
  width: 93px;
}
.col-end {
  width: 5px;
}
.tbody {
  flex: 1;
  background:
    linear-gradient(#282828, #282828) 199px 0 / 1px 100% no-repeat,
    linear-gradient(#282828, #282828) 223px 0 / 1px 100% no-repeat,
    linear-gradient(#282828, #282828) 316px 0 / 1px 100% no-repeat,
    repeating-linear-gradient(#343434 0, #343434 19px, #282828 19px, #282828 20px);
}
.row {
  height: 20px;
  display: flex;
  align-items: center;
  white-space: nowrap;
  line-height: 20px;
}
.twig {
  width: 36px;
  height: 20px;
  margin-right: 2px;
}
.twig.long {
  width: 52px;
}
.okmark {
  width: 16px;
  height: 14px;
  margin-left: auto;
  margin-right: 80px;
}

/* viewer */
.viewer {
  flex: 1;
  min-width: 0;
  display: flex;
  flex-direction: column;
}
.filetabs {
  height: 26px;
  flex: none;
  background: #2f2f2f;
  display: flex;
  align-items: center;
  font-size: 12px;
  white-space: nowrap;
  overflow: hidden;
}
.ftab {
  height: 26px;
  display: flex;
  align-items: center;
  gap: 4px;
  padding-left: 6px;
  flex: none;
}
.ftab.on {
  width: 131px;
  padding-left: 7px;
  background: #3196b9;
  color: #fff;
}
.fico {
  width: 15px;
  height: 15px;
}
.fclose {
  margin-left: 8px;
  color: #777;
  font-size: 11px;
}
.ftab.t2 {
  width: 165px;
}
.ftab.t3 {
  width: 137px;
}
.fdoc {
  width: 10px;
  height: 14px;
  margin-left: 3px;
}
.canvas {
  flex: 1;
  background: #fff;
  position: relative;
  overflow: hidden;
}
.scene {
  position: absolute;
  left: 0;
  top: 0;
  width: 653px;
  height: 689px;
}
.dim-text {
  font-family: "Liberation Sans", sans-serif;
  font-size: 10px;
  fill: #8a85bf;
}
.dim-long {
  font-family: "Liberation Sans", sans-serif;
  font-size: 11px;
  fill: #8a85bf;
}
.dots {
  stroke: #666;
  stroke-width: 1;
}
.axis-y, .axis-z {
  font-family: "Liberation Sans", sans-serif;
  font-size: 10px;
}
.axis-y { fill: #2aa02a; }
.axis-z { fill: #2b3fe0; }
.watermark {
  position: absolute;
  left: 495px;
  top: 667px;
  font-family: "Liberation Mono", "Noto Sans CJK SC", monospace;
  font-size: 15px;
  font-weight: 300;
  color: #6a6a6a;
  white-space: nowrap;
}

/* dialog */
.dialog {
  position: absolute;
  left: 76px;
  top: 1px;
  width: 328px;
  height: 535px;
  background: #333;
  border: 1px solid #111;
  border-top: 0;
  padding: 0 6px 0 5px;
}
.dlg-title {
  height: 23px;
  margin: 0 -6px 0 -5px;
  background: #3196b9;
  display: flex;
  align-items: center;
  color: #fff;
  font-size: 13px;
  padding: 0 8px 0 7px;
}
.dlg-gear {
  width: 13px;
  height: 13px;
}
.dlg-name {
  flex: 1;
  margin-left: 8px;
}
.dlg-act {
  width: 12px;
  height: 12px;
}
.dlg-act.close {
  width: 12px;
  margin-left: 12px;
}
.dlg-help {
  width: 10px;
  font-family: "Liberation Sans", sans-serif;
  font-weight: bold;
  font-size: 17px;
  margin-left: 8px;
}
.panel {
  background: #454545;
  border-bottom: 2px solid #2a2a2a;
  margin-top: 4px;
  padding: 0 8px 0 9px;
}
.props {
  height: 310px;
}
.mats {
  height: 131px;
}
.sec-head {
  height: 25px;
  display: flex;
  align-items: center;
  gap: 8px;
  font-size: 14px;
  color: #3a95b6;
  margin-left: -3px;
}
.sec-tri {
  width: 10px;
  height: 6px;
}
.prop {
  height: 27px;
  display: flex;
  align-items: center;
  justify-content: space-between;
}
.sec-head + .prop {
  margin-top: 4px;
}
.sel {
  width: 141px;
  height: 25px;
  border: 1px solid #c8c8c8;
  display: flex;
  align-items: center;
  justify-content: space-between;
  padding: 0 5px 0 4px;
  color: #fff;
}
.dash {
  letter-spacing: 1px;
}
.clear-btn {
  height: 29px;
  margin-top: 1px;
  border: 1px solid #c8c8c8;
  text-align: center;
  line-height: 27px;
  color: #fff;
}
.mats .sec-head {
  height: 23px;
  margin-bottom: 6px;
}
.listbox {
  height: 94px;
  width: 296px;
  margin-right: -4px;
  border: 2px solid #2b2b2b;
  display: flex;
}
.listbox ul {
  flex: 1;
  margin: 0;
  padding: 1px 0 0 0;
  list-style: none;
  line-height: 17px;
}
.sbar {
  width: 17px;
  background: #f0f0f0;
  display: flex;
  flex-direction: column;
  align-items: center;
  justify-content: space-between;
  padding: 5px 0;
  position: relative;
}
.sarrow {
  width: 8px;
  height: 5px;
}
.sthumb {
  width: 15px;
  height: 17px;
  background: #cdcdcd;
  margin-top: 4px;
}
.collapse {
  height: 18px;
  display: flex;
  align-items: center;
  justify-content: center;
  border-bottom: 1px solid #111;
}
.tri-up {
  width: 10px;
  height: 5px;
}
.dlg-btns {
  display: flex;
  justify-content: flex-end;
  gap: 5px;
  margin-top: 8px;
  padding-right: 9px;
}
.btn {
  width: 54px;
  height: 25px;
  line-height: 23px;
  text-align: center;
  border: 1px solid #3196b9;
  color: #43a9cc;
}
.btn.off {
  border-color: #6a6a6a;
  color: #6d6d6d;
}
```
